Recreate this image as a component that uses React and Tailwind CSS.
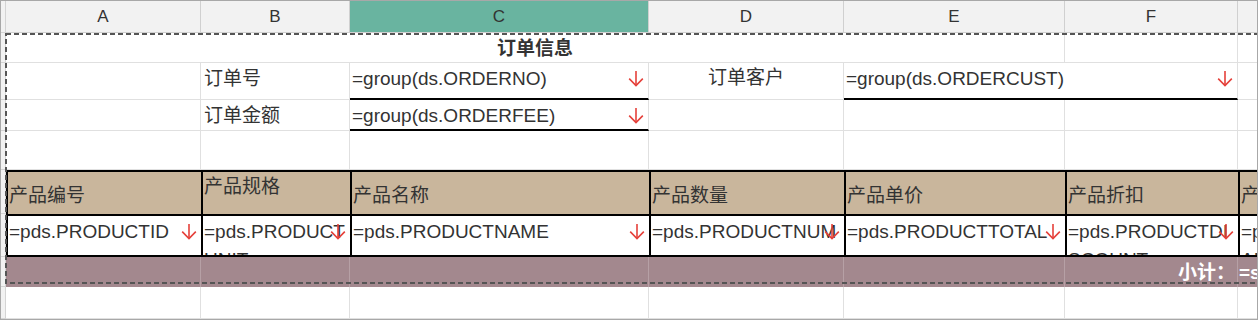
import React from 'react';

// Spreadsheet-style report designer grid: order header, product detail band, subtotal band.
const FONT = { fontFamily: '"Liberation Sans", "Noto Sans CJK SC", Arial, sans-serif' };

function DownArrow() {
  return (
    <svg
      width="16"
      height="17"
      viewBox="0 0 16 17"
      fill="none"
      stroke="#e5403a"
      strokeWidth="1.6"
      className="absolute right-[4px] top-[7px]"
    >
      <path d="M8 1v14.5" />
      <path d="M1.2 8.6L8 15.5l6.8-6.9" />
    </svg>
  );
}

const grid = 'border-r border-b border-[#e0e0e0]';
const strip = 'bg-[#f2f2f2] border-r border-b border-[#d4d4d4]';

function HeaderRow() {
  const cols = ['A', 'B', 'C', 'D', 'E', 'F', ''];
  return (
    <>
      <div className={strip} />
      {cols.map((c, i) => (
        <div
          key={i}
          className={`flex items-center justify-center pt-px text-[17px] text-[#333] border-r border-b border-[#d0d0d0] ${
            c === 'C' ? 'bg-[#69b4a0]' : 'bg-[#f2f2f2]'
          }`}
        >
          {c}
        </div>
      ))}
    </>
  );
}

function Formula({ text, className = '', arrow = true }) {
  return (
    <div className={`relative overflow-hidden pl-0.5 pt-[2px] leading-[28px] whitespace-nowrap ${className}`}>
      {text}
      {arrow && <DownArrow />}
    </div>
  );
}

const band = 'border-t-2 border-l-2 border-black';

const heads = ['产品编号', '产品规格', '产品名称', '产品数量', '产品单价', '产品折扣', '产品金额'];
const fields = [
  '=pds.PRODUCTID',
  '=pds.PRODUCTUNIT',
  '=pds.PRODUCTNAME',
  '=pds.PRODUCTNUM',
  '=pds.PRODUCTTOTAL',
  '=pds.PRODUCTDISCOUNT',
  '=pds.PRODUCTAMOUNT',
];

export default function App() {
  return (
    <div className="w-[1259px] h-[322px] bg-white" style={FONT}>
      <div className="relative w-[1258px] h-[320px] border border-[#a8a8a8] overflow-hidden text-[19px] text-[#333]">
        <div className="grid grid-cols-[5px_195px_149px_299px_195px_221px_173px_150px] grid-rows-[32px_30px_37px_31px_39px_44px_43px_30px_32px]">
          <HeaderRow />

          {/* title row */}
          <div className={strip} />
          <div className={`col-span-5 text-center font-bold pt-[2px] leading-[28px] ${grid}`}>订单信息</div>
          <div className={grid} />
          <div className={grid} />

          {/* order no / customer */}
          <div className={strip} />
          <div className={grid} />
          <div className={`pl-[3px] pt-[2px] leading-[28px] ${grid}`}>订单号</div>
          <Formula text="=group(ds.ORDERNO)" className="border-r border-[#e0e0e0] border-b-2 border-b-black" />
          <div className={`text-center pt-[1px] leading-[28px] ${grid}`}>订单客户</div>
          <Formula text="=group(ds.ORDERCUST)" className="col-span-2 border-r border-[#e0e0e0] border-b-2 border-b-black" />
          <div className={grid} />

          {/* order fee */}
          <div className={strip} />
          <div className={grid} />
          <div className={`pl-[3px] pt-[2px] leading-[28px] ${grid}`}>订单金额</div>
          <Formula text="=group(ds.ORDERFEE)" className="border-r border-[#e0e0e0] border-b-2 border-b-black" />
          <div className={grid} />
          <div className={grid} />
          <div className={grid} />
          <div className={grid} />

          {/* spacer row */}
          <div className={strip} />
          {[0, 1, 2, 3, 4, 5, 6].map((i) => (
            <div key={i} className={grid} />
          ))}

          {/* product header band */}
          <div className={strip} />
          {heads.map((h, i) => (
            <div
              key={h}
              className={`flex ${i === 1 ? 'items-start pt-px' : 'items-center pt-[5px]'} bg-[#c9b69c] pl-px leading-[28px] whitespace-nowrap overflow-hidden ${band}`}
            >
              {h}
            </div>
          ))}

          {/* product detail band */}
          <div className={strip} />
          {fields.map((f, i) => (
            <div
              key={f}
              className={`relative overflow-hidden bg-white pl-px pt-[2px] leading-[28px] break-all ${band} border-b-2`}
            >
              {f}
              {i < 6 && <DownArrow />}
            </div>
          ))}

          {/* subtotal band */}
          <div className={strip} />
          {[0, 1, 2, 3, 4].map((i) => (
            <div key={i} className="bg-[#a3888e] border-r border-[#b6a0a5]" />
          ))}
          <div className="bg-[#a3888e] border-r border-[#b6a0a5] text-right pr-[2px] pt-[2px] font-bold text-white leading-[28px]">
            小计：
          </div>
          <div className="bg-[#a3888e] pl-px pt-[2px] font-bold text-white leading-[28px] whitespace-nowrap overflow-hidden">
            =sum(pds.PRODUCTAMOUNT)
          </div>

          {/* trailing empty row */}
          <div className={strip} />
          {[0, 1, 2, 3, 4, 5, 6].map((i) => (
            <div key={i} className={grid} />
          ))}
        </div>

        {/* dashed selection frame over the report region */}
        <svg className="absolute left-[4px] top-[32px] pointer-events-none" width="1300" height="252">
          <rect x="1" y="1" width="1400" height="249" fill="none" stroke="#555" strokeWidth="2" strokeDasharray="5 3" />
        </svg>
      </div>
    </div>
  );
}
